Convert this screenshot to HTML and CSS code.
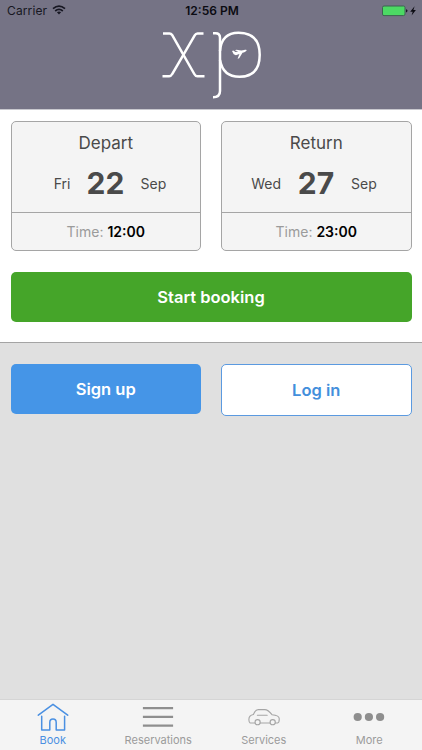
FILE: index.html
```html
<!DOCTYPE html>
<html lang="en">
<head>
<meta charset="utf-8">
<meta name="viewport" content="width=device-width">
<title>Book</title>
<link rel="stylesheet" href="styles.css">
</head>
<body>
<div class="app">
  <header class="header">
    <div class="status">
      <div class="carrier"><span>Carrier</span>
        <svg width="14" height="10" viewBox="0 0 14 10" fill="none" stroke="#171722" stroke-width="1.7"><path d="M1 3.7Q7-1.6 13 3.7"/><path d="M3.2 6Q7 2.6 10.8 6"/><path d="M4.9 7.3Q7 5.8 9.1 7.3L7 9.6Z" fill="#171722" stroke="none"/></svg>
      </div>
      <div class="clock">12:56 PM</div>
      <div class="power">
        <svg width="36" height="12" viewBox="0 0 36 12"><rect x="1.5" y="1" width="22.5" height="9.6" rx="1.5" fill="#4cd964" stroke="#3d6350"/><path d="M25 4.2Q26.5 4.5 26.5 5.8T25 7.5Z" fill="#171722"/><path d="M33.6 1.2L29.2 6.7H31.7L30.6 10.6L34.9 5.1H32.4Z" fill="#0b0b12"/></svg>
      </div>
    </div>
    <svg class="logo" width="100" height="72" viewBox="0 0 100 72" fill="none" stroke="#fff" stroke-width="2.5">
      <path d="M1 4.4H7.5Q9.1 4.4 10.1 6L32.3 45Q33.4 47.2 35.4 47.2H42.5"/>
      <path d="M41.5 4.4H35.5Q33.8 4.4 32.7 6.3L10.2 45Q9 47.2 7.2 47.2H.5"/>
      <path d="M51 4.3H53.5Q58 4.3 58 9V62Q58 68.3 51 68.3"/>
      <path d="M58 22Q59.5 3.8 76.5 3.8Q97.7 3.8 97.7 25.8Q97.7 47.8 77.5 47.8Q61 47.8 58 31"/>
      <path d="M70 21.9L71.3 21.6L73.4 23.1L76.2 22.4L72.8 21.3L74.4 20.8L79.3 21.6L82.2 21C83.9 20.6 85 21 84.5 21.8C84 22.6 82 23.4 80.5 23.8L77.2 29.2L75.6 29.8L77.4 24.9L73.9 26.2L71.7 25.2Z" fill="#fff" stroke="none"/>
    </svg>
  </header>
  <main class="booking">
    <div class="dates">
      <section class="card">
        <div class="card-date">
          <h2>Depart</h2>
          <div class="date"><span class="weekday">Fri</span><b>22</b><span class="month">Sep</span></div>
        </div>
        <div class="time"><span>Time:</span> <b>12:00</b></div>
      </section>
      <section class="card">
        <div class="card-date">
          <h2>Return</h2>
          <div class="date"><span class="weekday">Wed</span><b>27</b><span class="month">Sep</span></div>
        </div>
        <div class="time"><span>Time:</span> <b>23:00</b></div>
      </section>
    </div>
    <button class="button start">Start booking</button>
  </main>
  <div class="account">
    <button class="button signup">Sign up</button>
    <button class="button login">Log in</button>
  </div>
  <nav class="tabs">
    <a class="tab active">
      <svg width="32" height="30" viewBox="0 0 32 30" fill="none" stroke="currentColor" stroke-width="1.5" stroke-linecap="round" stroke-linejoin="round"><path d="M1.3 14.2L16 3.3L30.7 14.2"/><path d="M4.7 15.3V29.1H12.8V21.5Q12.8 18.1 16 18.1T19.2 21.5V29.1H27.6V15.3"/></svg>
      <span>Book</span>
    </a>
    <a class="tab">
      <svg width="32" height="30" viewBox="0 0 32 30" stroke="#8e8e8e" stroke-width="2.3"><path d="M.9 7.2H31.1M.9 15.9H31.1M.9 24.6H31.1"/></svg>
      <span>Reservations</span>
    </a>
    <a class="tab">
      <svg width="32" height="30" viewBox="0 0 32 30" fill="none" stroke="#a5a5a5" stroke-width="1.1" stroke-linecap="round" stroke-linejoin="round"><path d="M7 22H2.1Q.8 21.5.9 18.4Q.8 14.4 5.4 13.5Q7.3 8.6 10.3 8.6H16.8Q20 8.6 24 13.7Q31.4 14.3 31.2 17.7Q31.4 21.4 29.6 22H27.3M22.1 22H12.1M9.4 14.2H19.2"/><circle cx="9.6" cy="21.2" r="2.6"/><circle cx="24.7" cy="21.2" r="2.6"/></svg>
      <span>Services</span>
    </a>
    <a class="tab">
      <svg width="32" height="30" viewBox="0 0 32 30" fill="#8e8e8e"><circle cx="4.7" cy="16" r="4.1"/><circle cx="15.9" cy="16" r="4.1"/><circle cx="27.1" cy="16" r="4.1"/></svg>
      <span>More</span>
    </a>
  </nav>
</div>
</body>
</html>
```
FILE: styles.css
```css
* {
  box-sizing: border-box;
}

body {
  margin: 0;
  font-family: Inter, "Liberation Sans", sans-serif;
  color: #4a4a4a;
}

.app {
  display: flex;
  flex-direction: column;
  height: 750px;
  overflow: hidden;
  background: #e0e0e0;
}

.header {
  display: flex;
  flex-direction: column;
  align-items: center;
  height: 110px;
  background: #757385;
  border-bottom: 1px solid #c8c8ce;
}

.status {
  display: grid;
  grid-template-columns: 1fr auto 1fr;
  width: 100%;
  height: 22px;
  padding: 0 5px 0 7px;
  line-height: 22px;
  color: #171722;
}

.carrier {
  display: flex;
  gap: 5px;
  font-size: 12px;
  letter-spacing: .12px;
}

.carrier svg {
  margin-top: 5px;
}

.clock {
  font-size: 12px;
  font-weight: 600;
  color: #0b0b12;
}

.power {
  display: flex;
  justify-content: flex-end;
}

.power svg {
  margin-top: 5px;
}

.logo {
  margin: 7px 0 0 1px;
}

.booking {
  height: 233px;
  padding: 11px 10.5px 0;
  background: #fff;
  border-bottom: 1px solid #a4a4a4;
}

.dates {
  display: grid;
  grid-template-columns: 1fr 1fr;
  gap: 20px;
}

.card {
  height: 130px;
  background: #f4f4f4;
  border: 1px solid #a5a5a5;
  border-radius: 5px;
}

.card-date {
  height: 91px;
  border-bottom: 1px solid #a5a5a5;
}

h2 {
  margin: 0;
  padding-top: 10px;
  font-size: 17px;
  font-weight: 400;
  line-height: 22px;
  text-align: center;
}

.date {
  display: grid;
  grid-template-columns: 59px 70px 1fr;
  align-items: center;
  height: 42px;
  margin-top: 8px;
  font-size: 14px;
}

.date b {
  font-size: 30px;
  text-align: center;
}

.weekday {
  text-align: right;
}

.time {
  font-size: 14px;
  line-height: 38px;
  text-align: center;
}

.time span {
  color: #9b9b9b;
}

.time b {
  color: #000;
  font-weight: 600;
}

.button {
  display: block;
  height: 50px;
  padding: 0;
  border: 0;
  border-radius: 5px;
  font-family: inherit;
  font-size: 16.5px;
  font-weight: 600;
  text-align: center;
  color: #fff;
}

.start {
  width: 100%;
  margin-top: 21px;
  background: #45a529;
}

.account {
  display: grid;
  grid-template-columns: 1fr 1fr;
  gap: 20px;
  align-items: start;
  padding: 20.5px 10.5px;
}

.signup {
  background: #4595e7;
}

.login {
  height: 52px;
  background: #fff;
  border: 1px solid #5b9ae0;
  color: #438fdc;
}

.tabs {
  display: grid;
  grid-template-columns: repeat(4, 1fr);
  height: 51px;
  margin-top: auto;
  background: #f4f4f4;
  border-top: 1px solid #d5d5d5;
}

.tab {
  display: flex;
  flex-direction: column;
  align-items: center;
  padding-top: 1px;
  color: #9b9b9b;
  font-size: 11px;
  line-height: 18px;
}

.active {
  color: #4a90e2;
}
```
